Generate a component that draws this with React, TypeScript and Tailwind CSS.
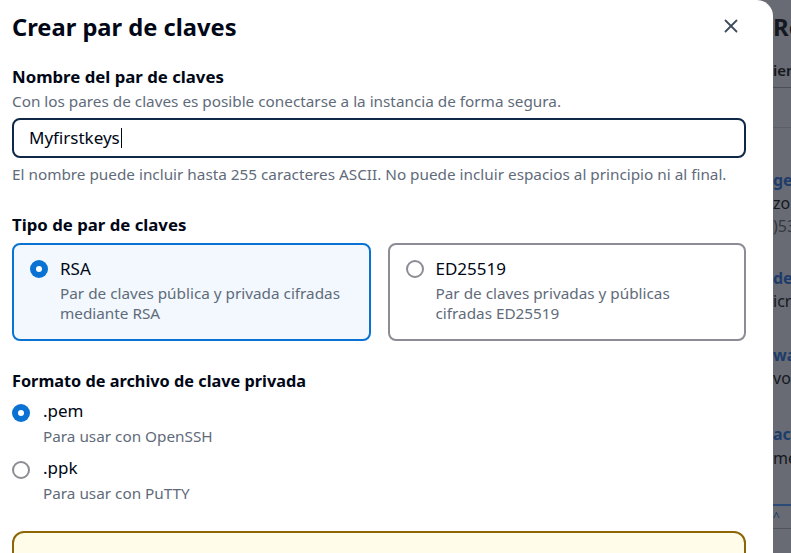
import { X } from 'lucide-react'

const font = { fontFamily: '"Noto Sans", "Open Sans", Arial, sans-serif' }

function Radio({ checked }: { checked: boolean }) {
  if (checked) {
    return (
      <span className="flex h-[18px] w-[18px] shrink-0 items-center justify-center rounded-full bg-[#0972d3]">
        <span className="h-[6px] w-[6px] rounded-full bg-white" />
      </span>
    )
  }
  return <span className="h-[18px] w-[18px] shrink-0 rounded-full border-2 border-[#8c8c94] bg-white" />
}

interface KeyTypeCardProps {
  label: string
  lines: string[]
  selected: boolean
}

function KeyTypeCard({ label, lines, selected }: KeyTypeCardProps) {
  return (
    <div
      className={`flex h-[98px] gap-3 rounded-lg border-2 pl-4 pr-4 pt-[13px] ${
        selected ? 'border-[#0972d3] bg-[#f2f8fd]' : 'border-[#8c8c94] bg-white'
      }`}
    >
      <div className="flex h-[22px] items-center">
        <Radio checked={selected} />
      </div>
      <div>
        <div className="text-[17px] leading-[22px] text-[#000716]">{label}</div>
        <div className="mt-[3px] text-[15.3px] leading-[20px] text-[#5f6b7a]">
          {lines.map(l => (
            <div key={l}>{l}</div>
          ))}
        </div>
      </div>
    </div>
  )
}

function FormatOption({ label, hint, checked }: { label: string; hint: string; checked: boolean }) {
  return (
    <div className="flex gap-[13px]">
      <div className="flex h-[26px] items-center">
        <Radio checked={checked} />
      </div>
      <div>
        <div className="text-[17px] leading-[22px] text-[#000716]">{label}</div>
        <div className="mt-[4px] text-[15.3px] leading-[20px] text-[#5f6b7a]">{hint}</div>
      </div>
    </div>
  )
}

function BackgroundStrip() {
  return (
    <div className="flex-1 overflow-hidden whitespace-nowrap bg-[#686b73] text-[#15181e]">
      <div className="mt-[11px] text-[24px] font-bold leading-[32px]">Re</div>
      <div className="mt-[16px] text-[15px] font-semibold leading-[22px]">ien</div>
      <div className="mt-[6px] h-px bg-[#4a4e56]" />
      <div className="mt-[39px] h-px bg-[#5a5e66]" />
      <div className="mt-[41px] text-[16px] font-bold leading-[22px] text-[#1d3c6a]">ge</div>
      <div className="text-[16px] leading-[24px]">zo</div>
      <div className="text-[16px] leading-[22px] text-[#33383f]">)53</div>
      <div className="mt-[30px] text-[16px] font-bold leading-[22px] text-[#1d3c6a]">de</div>
      <div className="text-[16px] leading-[24px]">icr</div>
      <div className="mt-[31px] text-[16px] font-bold leading-[22px] text-[#1d3c6a]">wa</div>
      <div className="text-[16px] leading-[24px]">vo</div>
      <div className="mt-[33px] text-[16px] font-bold leading-[22px] text-[#1d3c6a]">ac</div>
      <div className="text-[16px] leading-[26px]">me</div>
      <div className="mt-[33px] h-[2px] bg-[#2c4a78]" />
      <div className="h-[22px] text-[12px] leading-[22px] text-[#1d3c6a]">^</div>
      <div className="h-px bg-[#50545c]" />
    </div>
  )
}

export default function App() {
  return (
    <div className="flex h-[553px] w-[791px] overflow-hidden bg-[#686b73]" style={font}>
      <div className="w-[773px] shrink-0 rounded-tr-2xl bg-white px-3">
        <div className="flex items-start justify-between pr-[19px] pt-[11px]">
          <h1 className="text-[23.7px] font-bold leading-[32px] text-[#000716]">Crear par de claves</h1>
          <X className="mt-[4px] h-[22px] w-[22px] text-[#414d5c]" strokeWidth={2} />
        </div>

        <div className="mt-[23px] pr-[15px]">
          <div className="text-[16.8px] font-bold leading-[22px] text-[#000716]">Nombre del par de claves</div>
          <div className="mt-[3px] text-[15.3px] leading-[20px] text-[#5f6b7a]">
            Con los pares de claves es posible conectarse a la instancia de forma segura.
          </div>
          <div className="mt-[7px] flex h-[40px] items-center rounded-lg border-2 border-[#0f2847] px-[15px]">
            <span className="text-[17px] leading-[22px] text-[#000716]">Myfirstkeys</span>
            <span className="ml-px h-[20px] w-px bg-[#000716]" />
          </div>
          <div className="mt-[6px] text-[15.3px] leading-[20px] text-[#5f6b7a]">
            El nombre puede incluir hasta 255 caracteres ASCII. No puede incluir espacios al principio ni al final.
          </div>

          <div className="mt-[30px] text-[16.8px] font-bold leading-[22px] text-[#000716]">Tipo de par de claves</div>
          <div className="mt-[7px] grid grid-cols-2 gap-[17px]">
            <KeyTypeCard
              label="RSA"
              lines={['Par de claves pública y privada cifradas', 'mediante RSA']}
              selected
            />
            <KeyTypeCard
              label="ED25519"
              lines={['Par de claves privadas y públicas', 'cifradas ED25519']}
              selected={false}
            />
          </div>

          <div className="mt-[29px] text-[16.3px] font-bold leading-[22px] text-[#000716]">
            Formato de archivo de clave privada
          </div>
          <div className="mt-[8px] flex flex-col gap-[11px]">
            <FormatOption label=".pem" hint="Para usar con OpenSSH" checked />
            <FormatOption label=".ppk" hint="Para usar con PuTTY" checked={false} />
          </div>

          <div className="mt-[28px] h-[60px] rounded-xl border-2 border-[#8d6605] bg-[#fffce9]" />
        </div>
      </div>
      <BackgroundStrip />
    </div>
  )
}
